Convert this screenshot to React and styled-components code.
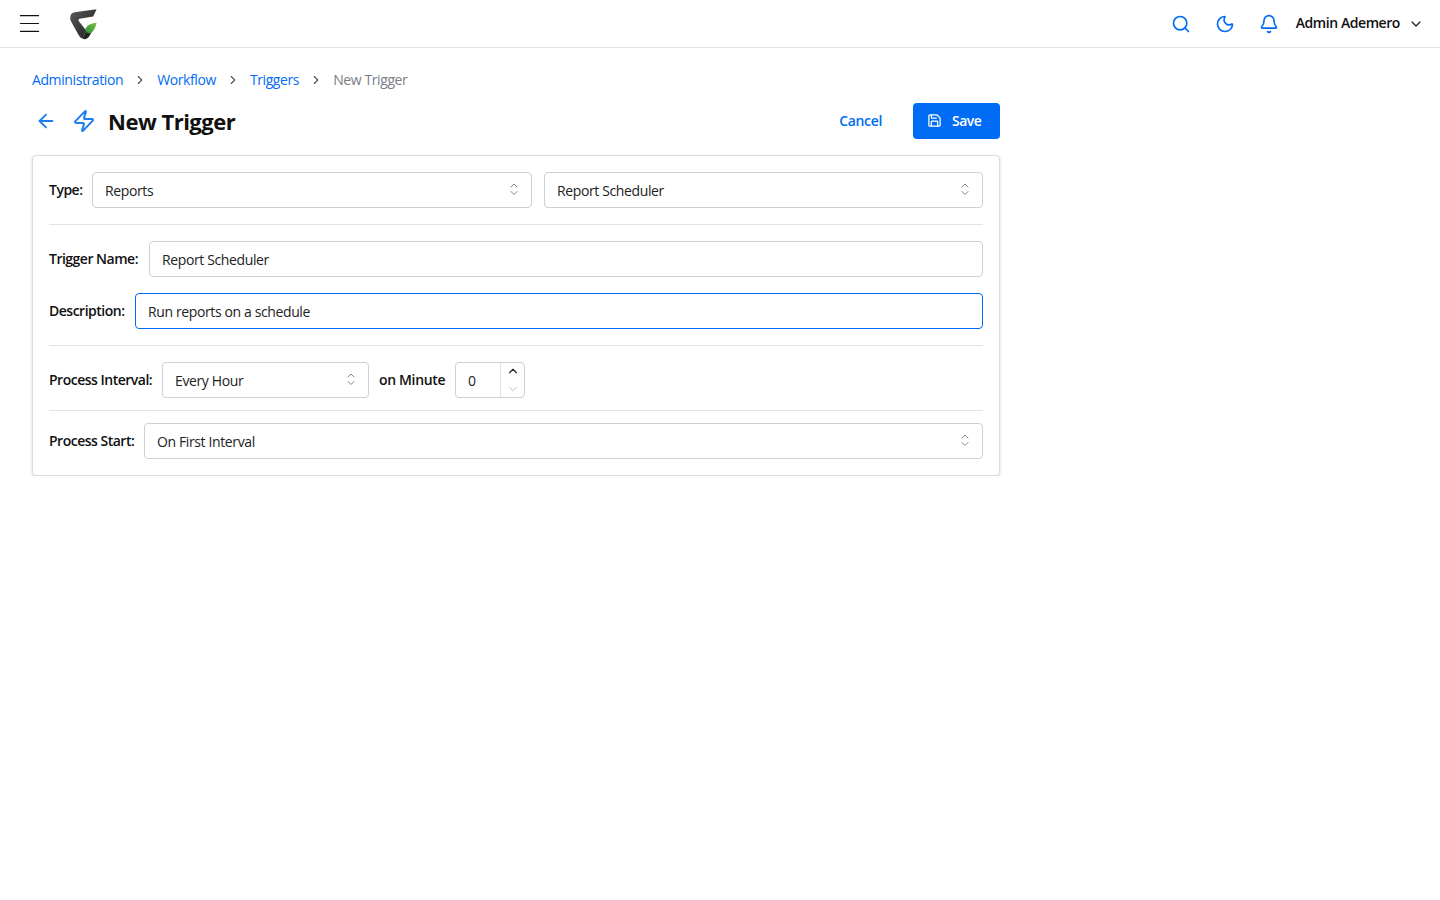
import React from "react";
import styled, { createGlobalStyle } from "styled-components";
import { ArrowLeft, Bell, ChevronDown, ChevronRight, ChevronUp, Menu, Moon, Save, Search, Zap } from "lucide-react";

const blue = "#006cf5";
const font = `"Open Sans", "Noto Sans", sans-serif`;

const GlobalStyle = createGlobalStyle`
  * { box-sizing: border-box; }
  html, body { margin: 0; background: #fff; }
  body { font-family: ${font}; color: #111; }
`;

const Topbar = styled.header`
  display: flex;
  align-items: center;
  height: 48px;
  padding: 0 16px 0 16px;
  border-bottom: 1px solid #e2e2e4;
`;

const MenuButton = styled.div`
  display: flex;
  color: #111;
  margin-right: 23px;
`;

const Logo = styled.svg`
  width: 34px;
  height: 34px;
  flex: none;
  margin-top: 2px;
`;

const TopActions = styled.div`
  display: flex;
  align-items: center;
  margin-left: auto;
  color: ${blue};
`;

const TopIcon = styled.div`
  display: flex;
  width: 20px;
  justify-content: center;
  margin-right: 24px;
`;

const UserName = styled.span`
  margin: -2px 0 0 -7px;
  font-size: 14px;
  font-weight: 600;
  letter-spacing: -0.42px;
  color: #111;
`;

const UserCaret = styled.div`
  display: flex;
  margin-left: 8px;
  color: #222;
`;

const Main = styled.main`
  width: 1000px;
  padding: 23px 0 0 32px;
`;

const Breadcrumbs = styled.nav`
  display: flex;
  align-items: center;
  height: 17px;
  font-size: 14px;
  letter-spacing: -0.4px;
`;

const Crumb = styled.a`
  color: ${(p) => (p.$current ? "#7a7d85" : blue)};
`;

const CrumbSep = styled.span`
  display: flex;
  width: 34px;
  justify-content: center;
  color: #555;
`;

const PageHead = styled.div`
  display: flex;
  align-items: center;
  height: 36px;
  margin-top: 15px;
  color: #1c7ef0;
`;

const BackIcon = styled.div`
  display: flex;
  margin: 0 15px 0 3px;
`;

const TitleIcon = styled.div`
  display: flex;
  margin-right: 12px;
`;

const Title = styled.h1`
  margin: 0;
  font-size: 22px;
  font-weight: 700;
  letter-spacing: -0.5px;
  color: #111;
`;

const HeadActions = styled.div`
  display: flex;
  align-items: center;
  margin-left: auto;
`;

const CancelButton = styled.span`
  margin: -2px 31px 0 0;
  font-size: 14px;
  font-weight: 600;
  letter-spacing: -0.35px;
  color: ${blue};
`;

const SaveButton = styled.button`
  display: flex;
  align-items: center;
  gap: 10px;
  width: 87px;
  height: 36px;
  padding: 0 0 2px 14px;
  border: 0;
  border-radius: 4px;
  background: ${blue};
  color: #fff;
  font-family: ${font};
  font-size: 14px;
  font-weight: 600;
  letter-spacing: -0.5px;
`;

const Card = styled.section`
  margin-top: 16px;
  padding: 16px;
  background: #fff;
  border: 1px solid #dcdde2;
  border-radius: 4px;
  box-shadow: 0 1px 3px rgba(0, 0, 0, 0.18);
`;

const Row = styled.div`
  display: flex;
  align-items: center;
  margin-bottom: ${(p) => p.$gap || 0}px;
`;

const Divider = styled.hr`
  margin: ${(p) => p.$space || 16}px 0;
  border: 0;
  border-top: 1px solid #e2e3e7;
`;

const Label = styled.label`
  flex: none;
  width: ${(p) => p.$width}px;
  margin-top: -2px;
  font-size: 14px;
  font-weight: 600;
  letter-spacing: -0.5px;
  white-space: nowrap;
  color: #111;
`;

const Field = styled.div`
  display: flex;
  align-items: center;
  flex: ${(p) => (p.$width ? "none" : "1")};
  width: ${(p) => (p.$width ? `${p.$width}px` : "auto")};
  height: 36px;
  padding: 1px 11px 0 12px;
  margin-left: ${(p) => p.$left || 0}px;
  border: 1px solid ${(p) => (p.$focused ? blue : "#ced0d6")};
  border-radius: 4px;
  font-size: 14px;
  letter-spacing: -0.38px;
  color: #222;
`;

const FieldValue = styled.span`
  flex: 1;
`;

const Updown = styled.svg`
  width: 12px;
  height: 16px;
  flex: none;
  margin-top: -3px;
`;

const MinuteLabel = styled(Label)`
  margin-left: 10px;
  letter-spacing: -0.35px;
`;

const Stepper = styled.div`
  display: flex;
  width: 70px;
  height: 36px;
  border: 1px solid #ced0d6;
  border-radius: 4px;
  font-size: 14px;
  color: #222;
`;

const StepperValue = styled.div`
  display: flex;
  align-items: center;
  flex: 1;
  padding: 1px 0 0 12px;
`;

const StepperArrows = styled.div`
  display: flex;
  flex-direction: column;
  align-items: center;
  justify-content: space-between;
  width: 24px;
  padding: 1px 0;
  border-left: 1px solid #e2e3e7;
`;

const StepArrow = styled.span`
  display: flex;
  color: ${(p) => (p.$off ? "#d8dade" : "#222")};
`;

const SelectArrows = () => (
  <Updown viewBox="0 0 12 16" fill="none" strokeLinecap="round" strokeLinejoin="round">
    <path d="M3 6 L6 3 L9 6" stroke="#7d828c" strokeWidth="1" />
    <path d="M3 10.5 L6 13.5 L9 10.5" stroke="#7d828c" strokeWidth="1" />
  </Updown>
);

const Select = ({ value, width, left }) => (
  <Field $width={width} $left={left}>
    <FieldValue>{value}</FieldValue>
    <SelectArrows />
  </Field>
);

export default function App() {
  return (
    <>
      <GlobalStyle />
      <Topbar>
        <MenuButton>
          <Menu size={27} strokeWidth={1.1} />
        </MenuButton>
        <Logo viewBox="0 0 30 30">
          <defs>
            <linearGradient id="logoDark" x1="0" y1="0" x2="1" y2="1">
              <stop offset="0" stopColor="#5a5a5a" />
              <stop offset="1" stopColor="#1c1c1c" />
            </linearGradient>
            <linearGradient id="logoLeaf" x1="1" y1="0" x2="0" y2="1">
              <stop offset="0" stopColor="#7cc24a" />
              <stop offset="1" stopColor="#2f8f32" />
            </linearGradient>
          </defs>
          <path
            d="M4 7 C4 5 6 4 9 3.5 L27 1 L24 7.5 L12 9.5 C10.5 10 11 11 11.5 12 L18 20 L14.5 27 C13 26.5 12 25 11 23.5 L4 11 C3.5 9.5 3.8 8 4 7 Z"
            fill="url(#logoDark)"
          />
          <path d="M14.5 27 C17 28.5 19 27 20.5 25 L24.5 18 L18 20 Z" fill="#222" />
          <path d="M17 19 C18 15 22 13.5 27 13 C26.5 16 25 20 22 22 C20 23 17.5 22 17 19 Z" fill="url(#logoLeaf)" />
        </Logo>
        <TopActions>
          <TopIcon>
            <Search size={20} />
          </TopIcon>
          <TopIcon>
            <Moon size={20} />
          </TopIcon>
          <TopIcon>
            <Bell size={20} />
          </TopIcon>
          <UserName>Admin Ademero</UserName>
          <UserCaret>
            <ChevronDown size={16} />
          </UserCaret>
        </TopActions>
      </Topbar>
      <Main>
        <Breadcrumbs>
          <Crumb>Administration</Crumb>
          <CrumbSep>
            <ChevronRight size={14} />
          </CrumbSep>
          <Crumb>Workflow</Crumb>
          <CrumbSep>
            <ChevronRight size={14} />
          </CrumbSep>
          <Crumb>Triggers</Crumb>
          <CrumbSep>
            <ChevronRight size={14} />
          </CrumbSep>
          <Crumb $current>New Trigger</Crumb>
        </Breadcrumbs>
        <PageHead>
          <BackIcon>
            <ArrowLeft size={22} />
          </BackIcon>
          <TitleIcon>
            <Zap size={24} />
          </TitleIcon>
          <Title>New Trigger</Title>
          <HeadActions>
            <CancelButton>Cancel</CancelButton>
            <SaveButton>
              <Save size={15} />
              Save
            </SaveButton>
          </HeadActions>
        </PageHead>
        <Card>
          <Row>
            <Label $width={43}>Type:</Label>
            <Select value="Reports" width={440} />
            <Select value="Report Scheduler" left={12} />
          </Row>
          <Divider />
          <Row $gap={16}>
            <Label $width={100}>Trigger Name:</Label>
            <Field>
              <FieldValue>Report Scheduler</FieldValue>
            </Field>
          </Row>
          <Row>
            <Label $width={86}>Description:</Label>
            <Field $focused>
              <FieldValue>Run reports on a schedule</FieldValue>
            </Field>
          </Row>
          <Divider />
          <Row>
            <Label $width={113}>Process Interval:</Label>
            <Select value="Every Hour" width={207} />
            <MinuteLabel $width={76}>on Minute</MinuteLabel>
            <Stepper>
              <StepperValue>0</StepperValue>
              <StepperArrows>
                <StepArrow>
                  <ChevronUp size={14} />
                </StepArrow>
                <StepArrow $off>
                  <ChevronDown size={14} />
                </StepArrow>
              </StepperArrows>
            </Stepper>
          </Row>
          <Divider $space={12} />
          <Row>
            <Label $width={95}>Process Start:</Label>
            <Select value="On First Interval" />
          </Row>
        </Card>
      </Main>
    </>
  );
}
